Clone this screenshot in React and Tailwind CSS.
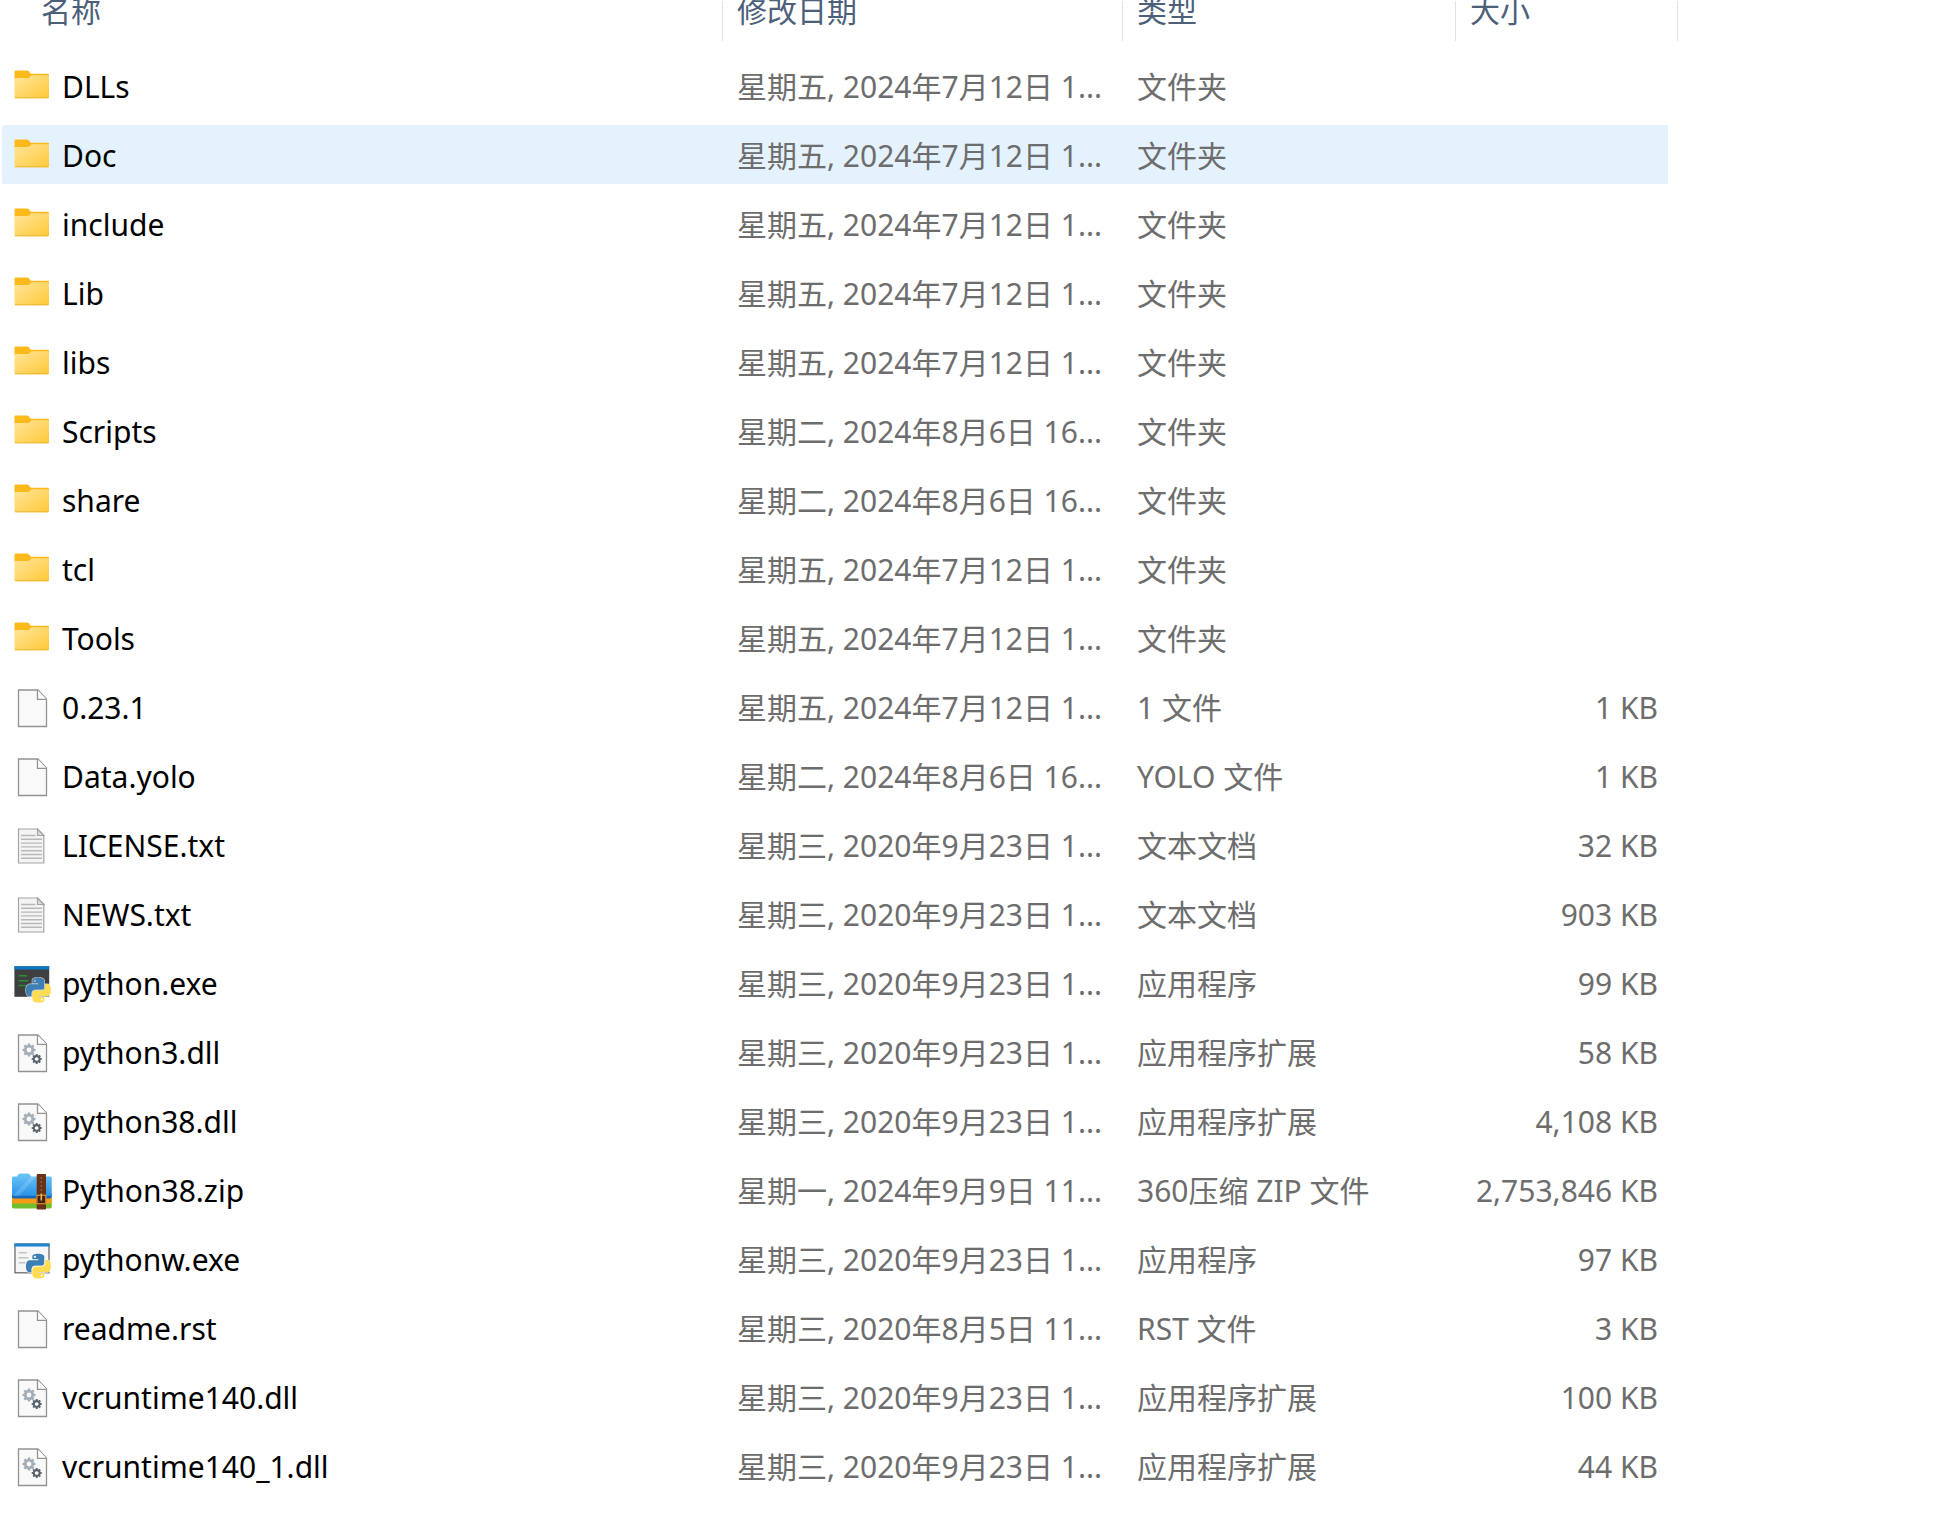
import React from "react";
import clsx from "clsx";

const FolderIcon = () => (
  <svg viewBox="0 0 40 40" className="size-10 shrink-0" aria-hidden="true">
    <defs>
      <linearGradient id="folder" x1="0" y1="0" x2="1" y2="1">
        <stop offset="0" stopColor="#ffe59c" />
        <stop offset="1" stopColor="#ffc937" />
      </linearGradient>
    </defs>
    <path
      d="M2.5 4.700a1.2 1.2 0 0 1 1.2-1.2H15c.8 0 1.3.2 1.8.7l1.9 2.600H36a1 1 0 0 1 1 1V12.500H2.500z"
      fill="#fbb91b"
    />
    <path
      d="M2.5 11.100h13.2c.8 0 1.3-.3 1.8-.8l1.6-1.6c.3-.3.7-.4 1.1-.4H37v21.700a1.2 1.2 0 0 1-1.2 1.2H3.700a1.2 1.2 0 0 1-1.2-1.200z"
      fill="url(#folder)"
    />
    <path d="M3 30.800h33.500" stroke="#eab32f" strokeWidth="0.900" />
  </svg>
);

const Page = () => (
  <>
    <path
      d="M6.500 2H26l8.500 9v27.500h-28z"
      fill="#f9f9f9"
      stroke="#929292"
      strokeWidth="1.300"
    />
    <path d="M25.500 2v9.300h9" fill="#fff" stroke="#929292" strokeWidth="1.300" />
  </>
);

const FileIcon = () => (
  <svg viewBox="0 0 40 40" className="size-10 shrink-0" aria-hidden="true">
    <Page />
  </svg>
);

const TextIcon = () => (
  <svg viewBox="0 0 40 40" className="size-10 shrink-0" aria-hidden="true">
    <path
      d="M6.500 3h19l6.300 6.500V37H6.500z"
      fill="#f4f4f4"
      stroke="#a4a4a4"
      strokeWidth="1.200"
    />
    <path
      d="M25.500 3v6.500h6.300z"
      fill="#dcdcdc"
      stroke="#a4a4a4"
      strokeWidth="1.200"
    />
    <path
      d="M9 9.500h14.500M9 13.300h21M9 17.100h21M9 20.900h21M9 24.700h21M9 28.500h21M9 32.300h21"
      stroke="#b8b8b8"
      strokeWidth="1.400"
    />
  </svg>
);

const Gear = ({ x, y, r, color }) => (
  <g transform={`translate(${x} ${y})`}>
    <circle r={r * 0.58} fill="none" stroke={color} strokeWidth={r * 0.42} />
    {[0, 45, 90, 135, 180, 225, 270, 315].map((angle) => (
      <rect
        key={angle}
        x={-r * 0.19}
        y={-r}
        width={r * 0.38}
        height={r * 0.36}
        fill={color}
        transform={`rotate(${angle})`}
      />
    ))}
  </g>
);

const DllIcon = () => (
  <svg viewBox="0 0 40 40" className="size-10 shrink-0" aria-hidden="true">
    <Page />
    <Gear x={17} y={17} r={6.5} color="#a4aeb8" />
    <Gear x={24.7} y={26} r={5} color="#59636c" />
  </svg>
);

const PythonMark = () => (
  <g
    transform="translate(14 13.800) scale(1.030)"
    stroke="#fff"
    strokeOpacity="0.700"
    strokeWidth="1.300"
    paintOrder="stroke"
  >
    <path
      fill="#3d7fb5"
      d="M14.25.18l.9.2.73.26.59.3.45.32.34.34.25.34.16.33.1.3.04.26.02.2-.01.13V8.5l-.05.63-.13.55-.21.46-.26.38-.3.31-.33.25-.35.19-.35.14-.33.1-.3.07-.26.04-.21.02H8.77l-.69.05-.59.14-.5.22-.41.27-.33.32-.27.35-.2.36-.15.37-.1.35-.07.32-.04.27-.02.21v3.06H3.17l-.21-.03-.28-.07-.32-.12-.35-.18-.36-.26-.36-.36-.35-.46-.32-.59-.28-.73-.21-.88-.14-1.05-.05-1.23.06-1.22.16-1.04.24-.87.32-.71.36-.57.4-.44.42-.33.42-.24.4-.16.36-.1.32-.05.24-.01h.16l.06.01h8.16v-.83H6.18l-.01-2.75-.02-.37.05-.34.11-.31.17-.28.25-.26.31-.23.38-.2.44-.18.51-.15.58-.12.64-.1.71-.06.77-.04.84-.02 1.27.05zm-6.3 1.98l-.23.33-.08.41.08.41.23.34.33.22.41.09.41-.09.33-.22.23-.34.08-.41-.08-.41-.23-.33-.33-.22-.41-.09-.41.09z"
    />
    <path
      fill="#ffdc4f"
      d="M21.1 6.11l.28.06.32.12.35.18.36.27.36.35.35.47.32.59.28.73.21.88.14 1.04.05 1.23-.06 1.23-.16 1.04-.24.86-.32.71-.36.57-.4.45-.42.33-.42.24-.4.16-.36.09-.32.05-.24.02-.16-.01h-8.22v.82h5.84l.01 2.76.02.36-.05.34-.11.31-.17.29-.25.25-.31.24-.38.2-.44.17-.51.15-.58.13-.64.09-.71.07-.77.04-.84.01-1.27-.04-1.07-.14-.9-.2-.73-.25-.59-.3-.45-.33-.34-.34-.25-.34-.16-.33-.1-.3-.04-.25-.02-.2.01-.13v-5.34l.05-.64.13-.54.21-.46.26-.38.3-.32.33-.24.35-.2.35-.14.33-.1.3-.06.26-.04.21-.02.13-.01h5.84l.69-.05.59-.14.5-.21.41-.28.33-.32.27-.35.2-.36.15-.36.1-.35.07-.32.04-.28.02-.21V6.07h2.09l.14.01zm-6.47 14.25l-.23.33-.08.41.08.41.23.33.33.23.41.08.41-.08.33-.23.23-.33.08-.41-.08-.41-.23-.33-.33-.23-.41-.08-.41.08z"
    />
  </g>
);

const ConsoleIcon = () => (
  <svg viewBox="0 0 40 40" className="size-10 shrink-0" aria-hidden="true">
    <rect x="2.400" y="2.300" width="34.800" height="30.500" fill="#3d3f41" />
    <rect x="2.400" y="2.300" width="34.800" height="3.200" fill="#0c78c8" />
    <path
      d="M6.500 11.700h8.500M6.500 16.700h10M6.500 21.500h8"
      stroke="#2f8a35"
      strokeWidth="1.500"
    />
    <PythonMark />
  </svg>
);

const WindowIcon = () => (
  <svg viewBox="0 0 40 40" className="size-10 shrink-0" aria-hidden="true">
    <rect
      x="3"
      y="4"
      width="34"
      height="28.800"
      fill="#f6f6f6"
      stroke="#6c6c6c"
      strokeWidth="1.300"
    />
    <rect x="2.400" y="3.500" width="35.200" height="3" fill="#1c86d1" />
    <path
      d="M6.500 12.800h8.500M6.500 17.800h10M6.500 22.800h7"
      stroke="#c4c4c4"
      strokeWidth="1.400"
    />
    <PythonMark />
  </svg>
);

const ZipIcon = () => (
  <svg viewBox="0 0 40 40" className="size-10 shrink-0" aria-hidden="true">
    <defs>
      <linearGradient id="zip" x1="0" y1="0" x2="0" y2="1">
        <stop offset="0" stopColor="#6cc6f8" />
        <stop offset="1" stopColor="#2a93e6" />
      </linearGradient>
    </defs>
    <path d="M0 28h39.700v7.800c0 1-.6 1.600-1.600 1.600H1.600c-1 0-1.600-.6-1.600-1.600z" fill="#6fc02c" />
    <path d="M0 24h39.700v6.800c0 1-.6 1.600-1.600 1.600H1.600c-1 0-1.600-.6-1.600-1.600z" fill="#f99a17" />
    <path d="M0 22h39.700v3.800c0 1-.6 1.600-1.600 1.600H1.600c-1 0-1.600-.6-1.600-1.600z" fill="#1767bd" />
    <path
      d="M0 7.300c0-1 .6-1.700 1.600-1.700H5l1.500-2.300c.3-.5.700-.7 1.200-.7h8.600c.5 0 .9.200 1.200.7L19 5.600h19.100c1 0 1.600.7 1.600 1.700v15.900c0 1-.6 1.600-1.600 1.600H1.600c-1 0-1.600-.6-1.600-1.600z"
      fill="url(#zip)"
    />
    <path d="M19 5.600h5L7 24.800H1z" fill="#fff" fillOpacity="0.160" />
    <rect x="24.700" y="3" width="9.300" height="35.500" rx="0.800" fill="#693217" />
    <path d="M29.300 6v16" stroke="#9a633f" strokeWidth="1.200" strokeDasharray="2 2" />
    <rect
      x="24.900"
      y="24.300"
      width="8.900"
      height="8.400"
      fill="#4a1f0e"
      stroke="#c98a35"
      strokeWidth="1.300"
    />
    <path d="M29.300 22.500v7" stroke="#e6b55e" strokeWidth="1.600" />
  </svg>
);

const icons = {
  folder: FolderIcon,
  file: FileIcon,
  text: TextIcon,
  console: ConsoleIcon,
  dll: DllIcon,
  zip: ZipIcon,
  window: WindowIcon,
};

const files = [
  { icon: "folder", name: "DLLs", date: "星期五, 2024年7月12日 1...", type: "文件夹" },
  { icon: "folder", name: "Doc", date: "星期五, 2024年7月12日 1...", type: "文件夹", active: true },
  { icon: "folder", name: "include", date: "星期五, 2024年7月12日 1...", type: "文件夹" },
  { icon: "folder", name: "Lib", date: "星期五, 2024年7月12日 1...", type: "文件夹" },
  { icon: "folder", name: "libs", date: "星期五, 2024年7月12日 1...", type: "文件夹" },
  { icon: "folder", name: "Scripts", date: "星期二, 2024年8月6日 16...", type: "文件夹" },
  { icon: "folder", name: "share", date: "星期二, 2024年8月6日 16...", type: "文件夹" },
  { icon: "folder", name: "tcl", date: "星期五, 2024年7月12日 1...", type: "文件夹" },
  { icon: "folder", name: "Tools", date: "星期五, 2024年7月12日 1...", type: "文件夹" },
  { icon: "file", name: "0.23.1", date: "星期五, 2024年7月12日 1...", type: "1 文件", size: "1 KB" },
  { icon: "file", name: "Data.yolo", date: "星期二, 2024年8月6日 16...", type: "YOLO 文件", size: "1 KB" },
  { icon: "text", name: "LICENSE.txt", date: "星期三, 2020年9月23日 1...", type: "文本文档", size: "32 KB" },
  { icon: "text", name: "NEWS.txt", date: "星期三, 2020年9月23日 1...", type: "文本文档", size: "903 KB" },
  { icon: "console", name: "python.exe", date: "星期三, 2020年9月23日 1...", type: "应用程序", size: "99 KB" },
  { icon: "dll", name: "python3.dll", date: "星期三, 2020年9月23日 1...", type: "应用程序扩展", size: "58 KB" },
  { icon: "dll", name: "python38.dll", date: "星期三, 2020年9月23日 1...", type: "应用程序扩展", size: "4,108 KB" },
  { icon: "zip", name: "Python38.zip", date: "星期一, 2024年9月9日 11...", type: "360压缩 ZIP 文件", size: "2,753,846 KB" },
  { icon: "window", name: "pythonw.exe", date: "星期三, 2020年9月23日 1...", type: "应用程序", size: "97 KB" },
  { icon: "file", name: "readme.rst", date: "星期三, 2020年8月5日 11...", type: "RST 文件", size: "3 KB" },
  { icon: "dll", name: "vcruntime140.dll", date: "星期三, 2020年9月23日 1...", type: "应用程序扩展", size: "100 KB" },
  { icon: "dll", name: "vcruntime140_1.dll", date: "星期三, 2020年9月23日 1...", type: "应用程序扩展", size: "44 KB" },
];

const Cell = ({ active, className, children }) => (
  <td className="p-0 py-[5px]">
    <div
      className={clsx(
        "flex h-[59px] items-center pt-0.5 whitespace-nowrap",
        active && "bg-[#e4f2fd]",
        className
      )}
    >
      {children}
    </div>
  </td>
);

const HeaderCell = ({ className, children, ...props }) => (
  <th scope="col" className="p-0 pb-2.5 text-left font-normal" {...props}>
    <div
      className={clsx(
        "flex h-10 items-center border-r border-[#e3e3e3] pb-5",
        className
      )}
    >
      <button type="button" className="leading-10 text-[#4c607a]">
        {children}
      </button>
    </div>
  </th>
);

const FileRow = ({ file }) => {
  const Icon = icons[file.icon];
  return (
    <tr>
      <Cell active={file.active} className="gap-2.5 rounded-l-xs pl-2.5 text-black">
        <Icon />
        <span>{file.name}</span>
      </Cell>
      <Cell active={file.active} className="pl-3.5">
        {file.date}
      </Cell>
      <Cell active={file.active} className="pl-3.5">
        {file.type}
      </Cell>
      <Cell active={file.active} className="justify-end rounded-r-xs pr-2.5">
        {file.size}
      </Cell>
      <td colSpan={2} />
    </tr>
  );
};

const App = () => (
  <main className="min-h-screen overflow-hidden bg-white pt-px pl-0.5 font-['Noto_Sans','Noto_Sans_CJK_SC',sans-serif] text-[30px] leading-10 text-[#6d6d6d]">
    <table className="w-full table-fixed border-separate border-spacing-0">
      <colgroup>
        <col />
        <col className="w-[400px]" />
        <col className="w-[333px]" />
        <col className="w-[212px]" />
        <col className="w-2.5" />
        <col className="w-[277px]" />
      </colgroup>
      <thead>
        <tr>
          <HeaderCell className="pl-[39px]">名称</HeaderCell>
          <HeaderCell className="pl-3.5">修改日期</HeaderCell>
          <HeaderCell className="pl-3.5">类型</HeaderCell>
          <HeaderCell className="pl-3.5" colSpan={2}>
            大小
          </HeaderCell>
          <td />
        </tr>
      </thead>
      <tbody>
        {files.map((file) => (
          <FileRow key={file.name} file={file} />
        ))}
      </tbody>
    </table>
  </main>
);

export default App;
